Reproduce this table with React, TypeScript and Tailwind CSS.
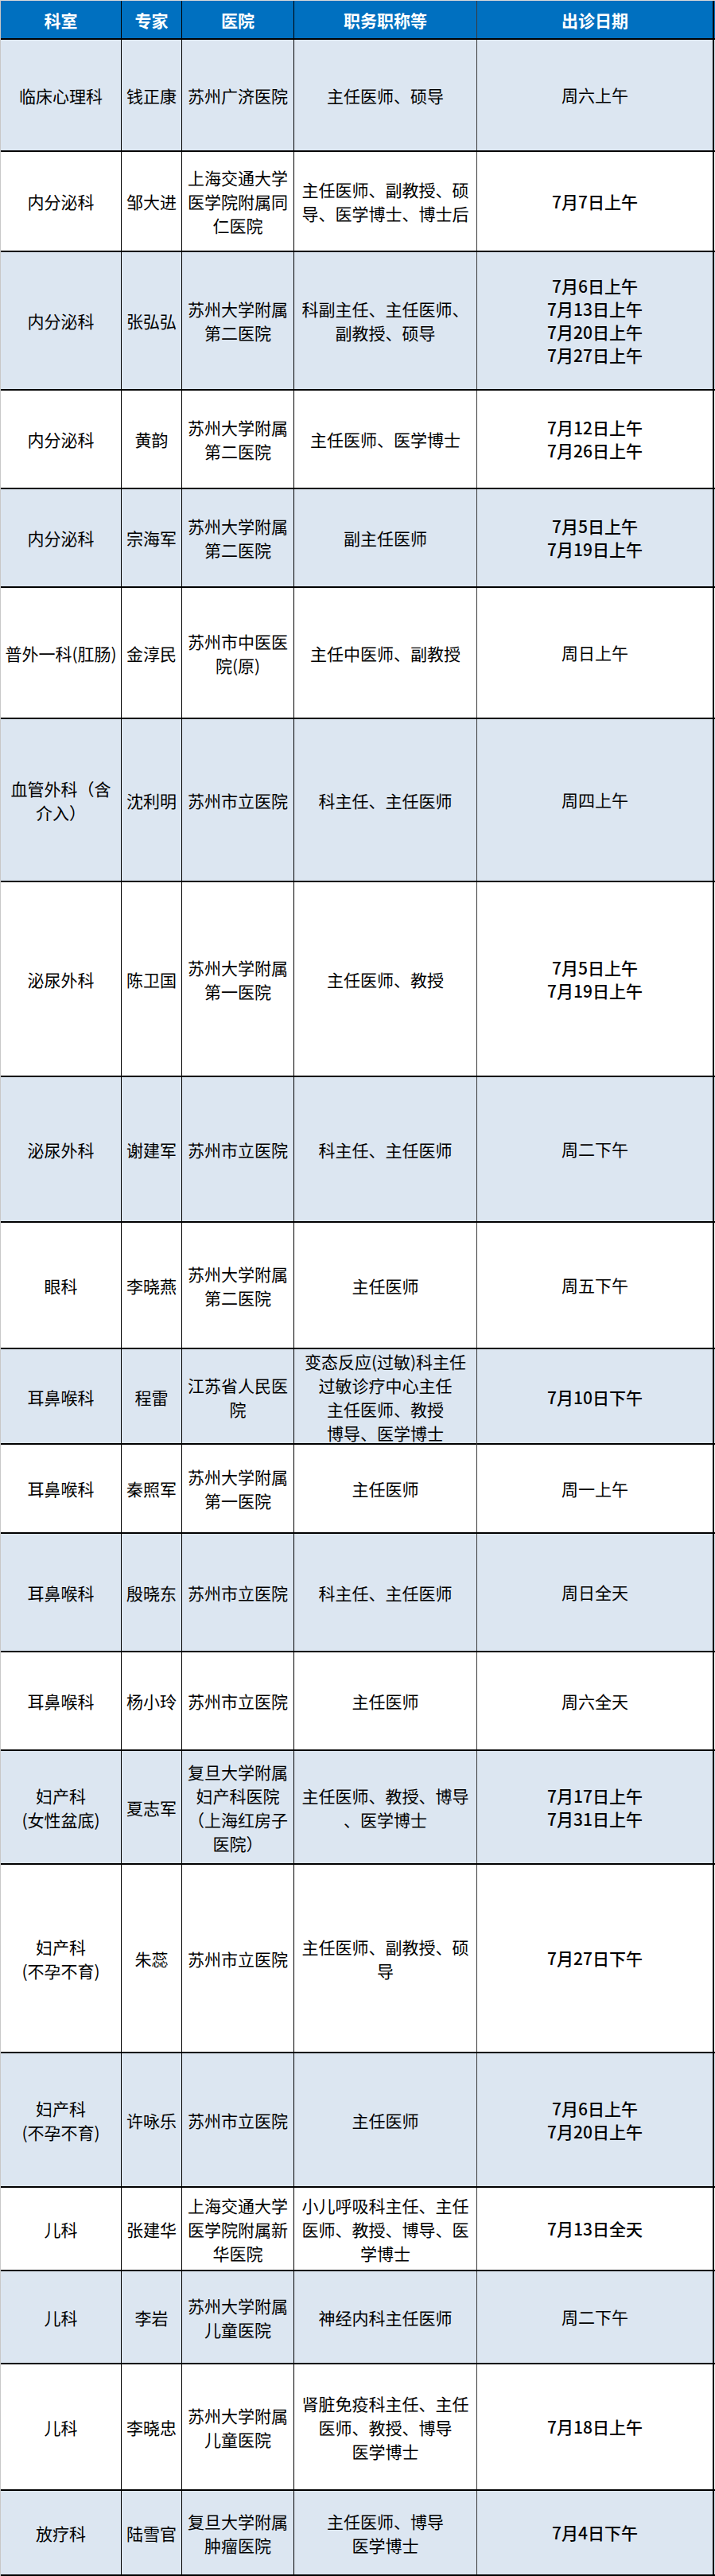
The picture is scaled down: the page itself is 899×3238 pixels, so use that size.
type Row = {
  h: string
  dept: string[]
  name: string
  hospital: string[]
  title: string[]
  date: string[]
}

const HEAD = ['科室', '专家', '医院', '职务职称等', '出诊日期']

const ROWS: Row[] = [
  { h: 'h-[141px]', dept: ['临床心理科'], name: '钱正康', hospital: ['苏州广济医院'], title: ['主任医师、硕导'], date: ['周六上午'] },
  { h: 'h-[126px]', dept: ['内分泌科'], name: '邹大进', hospital: ['上海交通大学', '医学院附属同', '仁医院'], title: ['主任医师、副教授、硕', '导、医学博士、博士后'], date: ['7月7日上午'] },
  { h: 'h-[174px]', dept: ['内分泌科'], name: '张弘弘', hospital: ['苏州大学附属', '第二医院'], title: ['科副主任、主任医师、', '副教授、硕导'], date: ['7月6日上午', '7月13日上午', '7月20日上午', '7月27日上午'] },
  { h: 'h-[124px]', dept: ['内分泌科'], name: '黄韵', hospital: ['苏州大学附属', '第二医院'], title: ['主任医师、医学博士'], date: ['7月12日上午', '7月26日上午'] },
  { h: 'h-[124px]', dept: ['内分泌科'], name: '宗海军', hospital: ['苏州大学附属', '第二医院'], title: ['副主任医师'], date: ['7月5日上午', '7月19日上午'] },
  { h: 'h-[165px]', dept: ['普外一科(肛肠)'], name: '金淳民', hospital: ['苏州市中医医', '院(原)'], title: ['主任中医师、副教授'], date: ['周日上午'] },
  { h: 'h-[205px]', dept: ['血管外科（含', '介入）'], name: '沈利明', hospital: ['苏州市立医院'], title: ['科主任、主任医师'], date: ['周四上午'] },
  { h: 'h-[245px]', dept: ['泌尿外科'], name: '陈卫国', hospital: ['苏州大学附属', '第一医院'], title: ['主任医师、教授'], date: ['7月5日上午', '7月19日上午'] },
  { h: 'h-[183px]', dept: ['泌尿外科'], name: '谢建军', hospital: ['苏州市立医院'], title: ['科主任、主任医师'], date: ['周二下午'] },
  { h: 'h-[159px]', dept: ['眼科'], name: '李晓燕', hospital: ['苏州大学附属', '第二医院'], title: ['主任医师'], date: ['周五下午'] },
  { h: 'h-[120px]', dept: ['耳鼻喉科'], name: '程雷', hospital: ['江苏省人民医', '院'], title: ['变态反应(过敏)科主任', '过敏诊疗中心主任', '主任医师、教授', '博导、医学博士'], date: ['7月10日下午'] },
  { h: 'h-[112px]', dept: ['耳鼻喉科'], name: '秦照军', hospital: ['苏州大学附属', '第一医院'], title: ['主任医师'], date: ['周一上午'] },
  { h: 'h-[149px]', dept: ['耳鼻喉科'], name: '殷晓东', hospital: ['苏州市立医院'], title: ['科主任、主任医师'], date: ['周日全天'] },
  { h: 'h-[124px]', dept: ['耳鼻喉科'], name: '杨小玲', hospital: ['苏州市立医院'], title: ['主任医师'], date: ['周六全天'] },
  { h: 'h-[143px]', dept: ['妇产科', '(女性盆底)'], name: '夏志军', hospital: ['复旦大学附属', '妇产科医院', '（上海红房子', '医院）'], title: ['主任医师、教授、博导', '、医学博士'], date: ['7月17日上午', '7月31日上午'] },
  { h: 'h-[237px]', dept: ['妇产科', '(不孕不育)'], name: '朱蕊', hospital: ['苏州市立医院'], title: ['主任医师、副教授、硕', '导'], date: ['7月27日下午'] },
  { h: 'h-[169px]', dept: ['妇产科', '(不孕不育)'], name: '许咏乐', hospital: ['苏州市立医院'], title: ['主任医师'], date: ['7月6日上午', '7月20日上午'] },
  { h: 'h-[105px]', dept: ['儿科'], name: '张建华', hospital: ['上海交通大学', '医学院附属新', '华医院'], title: ['小儿呼吸科主任、主任', '医师、教授、博导、医', '学博士'], date: ['7月13日全天'] },
  { h: 'h-[117px]', dept: ['儿科'], name: '李岩', hospital: ['苏州大学附属', '儿童医院'], title: ['神经内科主任医师'], date: ['周二下午'] },
  { h: 'h-[159px]', dept: ['儿科'], name: '李晓忠', hospital: ['苏州大学附属', '儿童医院'], title: ['肾脏免疫科主任、主任', '医师、教授、博导', '医学博士'], date: ['7月18日上午'] },
  { h: 'h-[107px]', dept: ['放疗科'], name: '陆雪官', hospital: ['复旦大学附属', '肿瘤医院'], title: ['主任医师、博导', '医学博士'], date: ['7月4日下午'] },
]

const GRID = 'grid grid-cols-[152px_76px_141px_230px_298px]'

function Lines({ lines, className = '' }: { lines: string[]; className?: string }) {
  return (
    <div className={`flex flex-col items-center ${className}`}>
      {lines.map((l, i) => (
        <span key={i} className="whitespace-nowrap">{l}</span>
      ))}
    </div>
  )
}

export default function App() {
  return (
    <div className="w-[899px] bg-white font-['Noto_Sans_CJK_SC',sans-serif] text-[21px] leading-[30px] text-black">
      <div className="border-t border-[#d9d9d9] border-l border-l-[#c8c8c8]">
        {/* header */}
        <div className={`${GRID} h-[49px] border-b-2 border-black bg-[#0070c0] font-bold text-white`}>
          {HEAD.map((t, i) => (
            <div
              key={t}
              className={`flex items-center justify-center ${i === 3 ? 'border-r border-[#3a3a3a]' : i === 4 ? 'border-r-2 border-black' : 'border-r border-black'}`}
            >
              {t}
            </div>
          ))}
        </div>

        {ROWS.map((r, idx) => (
          <div
            key={idx}
            className={`${GRID} ${r.h} border-b-2 border-black ${idx % 2 === 0 ? 'bg-[#dce6f1]' : 'bg-white'}`}
          >
            <div className="flex items-center justify-center border-r border-black">
              <Lines lines={r.dept} />
            </div>
            <div className="flex items-center justify-center border-r border-black">
              <span className="whitespace-nowrap">{r.name}</span>
            </div>
            <div className="flex items-center justify-center border-r border-black">
              <Lines lines={r.hospital} />
            </div>
            <div className="flex items-center justify-center border-r border-[#3a3a3a]">
              <Lines lines={r.title} />
            </div>
            <div className="flex items-center justify-center border-r-2 border-black">
              <div className="flex flex-col items-center leading-[29px]">
                {r.date.map((d, i) => (
                  <span key={i} className={`whitespace-nowrap ${/\d/.test(d) ? 'font-medium' : ''}`}>{d}</span>
                ))}
              </div>
            </div>
          </div>
        ))}
      </div>
    </div>
  )
}
